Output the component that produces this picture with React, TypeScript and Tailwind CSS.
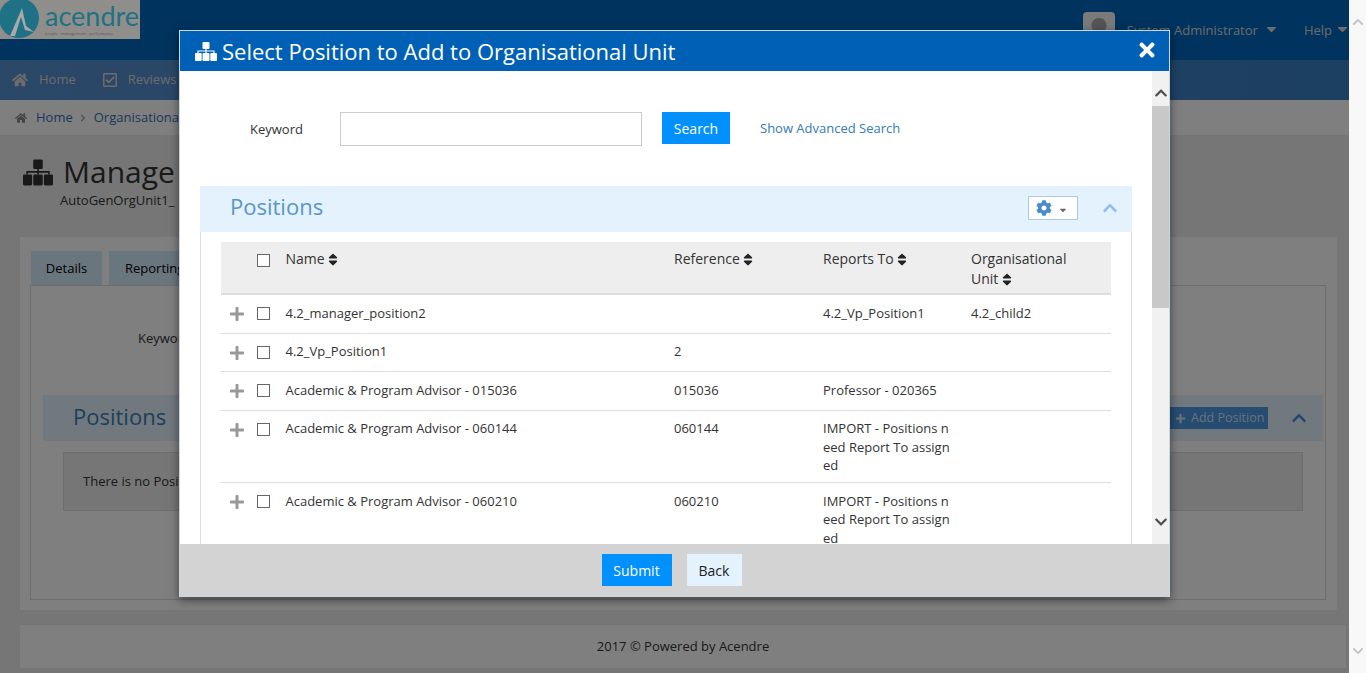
import { FaCaretDown, FaChevronDown, FaChevronRight, FaChevronUp, FaCog, FaHome, FaPlus, FaRegCheckSquare, FaSort, FaTimes, FaUser } from "react-icons/fa";

const rows = [
  { name: "4.2_manager_position2", ref: "", reports: "4.2_Vp_Position1", unit: "4.2_child2", h: "h-[38.5px]" },
  { name: "4.2_Vp_Position1", ref: "2", reports: "", unit: "", h: "h-[38.5px]" },
  { name: "Academic & Program Advisor - 015036", ref: "015036", reports: "Professor - 020365", unit: "", h: "h-[38.5px]" },
  { name: "Academic & Program Advisor - 060144", ref: "060144", reports: "IMPORT - Positions need Report To assigned", unit: "", h: "h-[72.5px]" },
  { name: "Academic & Program Advisor - 060210", ref: "060210", reports: "IMPORT - Positions need Report To assigned", unit: "", h: "h-[72px]" },
];

const gridCols = "grid grid-cols-[64.5px_388.5px_149px_148px_140px]";

function Box() {
  return <span className="block h-[13px] w-[13px] border border-[#666] bg-white" />;
}

function SitemapIcon({ className }: { className: string }) {
  return (
    <svg viewBox="0 0 22 19" fill="currentColor" className={className}>
      <rect x="7.5" y="0" width="7" height="7" rx="1" />
      <rect x="0" y="11" width="6.7" height="8" rx="1" />
      <rect x="7.5" y="11" width="7" height="8" rx="1" />
      <rect x="15.3" y="11" width="6.7" height="8" rx="1" />
      <path d="M10.4 7h1.2v1.4H19.6v2.6h-1.2V9.6h-6.8V11h-1.2V9.6H3.6V11H2.4V8.4h8z" />
    </svg>
  );
}

function SortHead({ label }: { label: string }) {
  return (
    <span>
      {label} <FaSort className="inline -mt-0.5 h-[15px] w-[10px] text-[#222]" />
    </span>
  );
}

function Logo() {
  return (
    <div className="relative z-10 flex h-[39px] w-[140px] items-start overflow-hidden bg-[#908e8b]">
      <svg width="40" height="39" viewBox="0 0 40 39" className="shrink-0">
        <circle cx="19" cy="18" r="20" fill="#1f7186" />
        <path d="M10 36 L22 8 L26 26 L34 32 L25 30 L21 17 L15 36 Z" fill="#a9a9a9" />
      </svg>
      <div className="ml-[5px] flex flex-col">
        <span className="font-['Lato',sans-serif] text-[27px] leading-[32px] text-[#1f7186]">acendre</span>
        <span className="-mt-[1px] whitespace-nowrap text-[4px] leading-[5px] text-[#555]">people · management · performance</span>
      </div>
    </div>
  );
}

function BackPage() {
  return (
    <div className="relative h-[673px] min-w-0 flex-1 overflow-hidden bg-[#ececec] text-[13px] text-[#333]">
      <header className="flex h-[60px] items-start justify-between bg-[#0066bd] text-white">
        <Logo />
        <div className="flex items-start pr-px pt-3 text-[13px] text-[#d8d8d8]">
          <span className="flex h-[36px] w-[32px] items-end justify-center overflow-hidden rounded bg-[#f4f4f4]">
            <FaUser className="h-[30px] w-[28px] text-[#aaa]" />
          </span>
          <span className="ml-3 mt-[9px]">System Administrator</span>
          <FaCaretDown className="ml-2 mt-[9px] h-4 w-[11px]" />
          <span className="ml-[27px] mt-[9px]">Help</span>
          <FaCaretDown className="ml-[5px] mt-[9px] h-4 w-[11px]" />
        </div>
      </header>
      <nav className="flex h-10 items-center bg-gradient-to-r from-[#5890d0] to-[#3880c4] pl-3 text-[13px] text-[#d8d8d8]">
        <FaHome className="h-4 w-4" />
        <span className="ml-[11px]">Home</span>
        <FaRegCheckSquare className="ml-[26px] h-4 w-4" />
        <span className="ml-[10px]">Reviews</span>
      </nav>
      <div className="flex h-[35px] items-center bg-white pl-[15px] text-[13px] text-[#3570b8]">
        <FaHome className="h-3 w-3 text-[#888]" />
        <span className="ml-[9px]">Home</span>
        <FaChevronRight className="mx-[6.5px] h-2 w-2 text-[#999]" />
        <span>Organisational</span>
      </div>
      <div className="px-[20px]">
        <div className="flex items-center pl-[3px] pt-[19px]">
          <SitemapIcon className="h-[27px] w-[30px] text-[#333]" />
          <span className="ml-[10px] text-[30px] leading-[36px]">Manage</span>
        </div>
        <div className="ml-10 mt-[1px] text-[13px] leading-[18px]">AutoGenOrgUnit1_</div>
        <section className="mt-[28px] h-[373px] w-[1317px] bg-white px-[10px] pt-[14px]">
          <div className="flex gap-[7px] pl-px text-[13px] text-black">
            <span className="flex h-[34px] w-[71px] items-center justify-center bg-[#d4ecfc] pt-px">Details</span>
            <span className="flex h-[34px] w-[130px] items-center bg-[#d4ecfc] pl-4 pt-px">Reporting</span>
          </div>
          <div className="h-[315px] w-[1296px] border border-[#ddd] px-3">
            <div className="ml-[95px] pt-[43px]">Keyword</div>
            <div className="mt-[46px] flex h-[46px] w-[1280px] items-center justify-between bg-[#e3f2fd] pl-[30px] pr-[16px]">
              <span className="pb-[3px] text-[22px] text-[#3c7fb8]">Positions</span>
              <div className="flex items-center gap-[23px]">
                <span className="flex h-[22px] w-[99px] items-center gap-[5px] bg-[#4c98e4] pl-[6px] pt-[2px] text-[12.5px] text-white/75">
                  <FaPlus className="h-[11px] w-[11px]" />
                  Add Position
                </span>
                <FaChevronUp className="h-4 w-4 text-[#4a8ddb]" />
              </div>
            </div>
            <div className="ml-5 mt-[11px] flex h-[59px] w-[1240px] items-center border border-[#ddd] bg-[#ececec] pl-[19px] pt-px">
              There is no Positions
            </div>
          </div>
        </section>
        <footer className="mt-[15px] flex h-[43px] w-[1326px] items-center justify-center bg-white text-[13px]">
          2017 © Powered by Acendre
        </footer>
      </div>
      <div className="absolute inset-0 z-[5] bg-black/50" />
    </div>
  );
}

function PositionsPanel() {
  return (
    <div className="mt-[40px] ml-[20px] w-[932px] text-[13px] leading-[18.57px] text-[#333]">
      <div className="flex h-[46px] items-center justify-between bg-[#e3f2fd] pl-[30px] pr-[14px]">
        <span className="pb-[6px] text-[22px] leading-[30px] text-[#5a96c8]">Positions</span>
        <div className="flex items-center gap-[24px] pb-[2px]">
          <span className="flex h-[24px] w-[50px] items-center gap-[6px] border border-[#a9cbe6] bg-white pl-[7px] text-[#4a8cc8]">
            <FaCog className="h-4 w-4" />
            <FaCaretDown className="mt-1 h-[10px] w-[10px] text-[#666]" />
          </span>
          <FaChevronUp className="h-4 w-4 text-[#8fbce8]" />
        </div>
      </div>
      <div className="border-x border-[#ddd] px-[20px] pt-[10px]">
        <div className={`${gridCols} h-[53px] border-b-2 border-[#ddd] bg-[#eee] pt-[7px] text-[14px] leading-[20px]`}>
          <span className="pl-[35.5px] pt-[5px]"><Box /></span>
          <SortHead label="Name" />
          <SortHead label="Reference" />
          <SortHead label="Reports To" />
          <span className="pr-[15px]">Organisational Unit <FaSort className="inline -mt-0.5 h-[15px] w-[10px] text-[#222]" /></span>
        </div>
        {rows.map((row) => (
          <div key={row.name} className={`${gridCols} ${row.h} border-b border-[#ddd] pt-[8.7px]`}>
            <span className="flex items-start pl-[8px] pt-px">
              <FaPlus className="mt-[1.5px] h-4 w-4 text-[#999]" />
              <span className="ml-[11.5px] pt-[2.5px]"><Box /></span>
            </span>
            <span>{row.name}</span>
            <span>{row.ref}</span>
            <span className="pr-[20px] break-all">{row.reports}</span>
            <span>{row.unit}</span>
          </div>
        ))}
      </div>
    </div>
  );
}

function Modal() {
  return (
    <div className="absolute left-[179px] top-[30px] z-20 flex h-[567px] w-[991px] flex-col border border-[#c8d8e8] bg-white shadow-[0_3px_9px_rgba(0,0,0,0.5)]">
      <div className="flex h-10 shrink-0 items-center justify-between bg-[#0060b6] pl-[15px] pr-[11px] text-white">
        <div className="flex items-center">
          <SitemapIcon className="h-[19px] w-[22px]" />
          <span className="ml-[5px] text-[22px]">Select Position to Add to Organisational Unit</span>
        </div>
        <FaTimes className="mb-[2px] h-[22px] w-[22px]" />
      </div>
      <div className="flex min-h-0 flex-1">
        <div className="min-w-0 flex-1 overflow-hidden">
          <div className="flex items-start pl-[70px] pt-[41px] text-[13px] text-[#333]">
            <span className="w-[90px] pt-[8px]">Keyword</span>
            <span className="h-[34px] w-[302px] border border-[#ccc] bg-white" />
            <span className="ml-[20px] flex h-[32px] w-[68px] items-center justify-center bg-[#0090ff] text-[14px] text-white">Search</span>
            <span className="ml-[30px] pt-[7px] text-[#337ab7]">Show Advanced Search</span>
          </div>
          <PositionsPanel />
        </div>
        <div className="flex w-[17px] shrink-0 flex-col bg-[#f1f1f1]">
          <span className="flex h-[35px] items-end justify-center pb-[6px]">
            <FaChevronUp className="h-[14px] w-[14px] text-[#505050]" />
          </span>
          <span className="h-[202px] bg-[#c8c8c8]" />
          <span className="flex flex-1 items-end justify-center pb-[15px]">
            <FaChevronDown className="h-[14px] w-[14px] text-[#505050]" />
          </span>
        </div>
      </div>
      <div className="flex h-[52px] shrink-0 items-center justify-center gap-[15px] bg-[#d3d3d3] pr-[6px] text-[14px]">
        <span className="flex h-[32px] w-[70px] items-center justify-center bg-[#0090ff] text-white">Submit</span>
        <span className="flex h-[32px] w-[55px] items-center justify-center bg-[#e3f2fd] text-[#222]">Back</span>
      </div>
    </div>
  );
}

export default function App() {
  return (
    <div className="relative flex h-[673px] w-full overflow-hidden font-['Open_Sans',sans-serif]">
      <BackPage />
      <div className="flex w-[17px] shrink-0 flex-col items-center justify-between bg-[#f8f8f8] py-4 text-[#c4c4c4]">
        <FaChevronUp className="h-3 w-3" />
        <FaChevronDown className="h-3 w-3" />
      </div>
      <Modal />
    </div>
  );
}
